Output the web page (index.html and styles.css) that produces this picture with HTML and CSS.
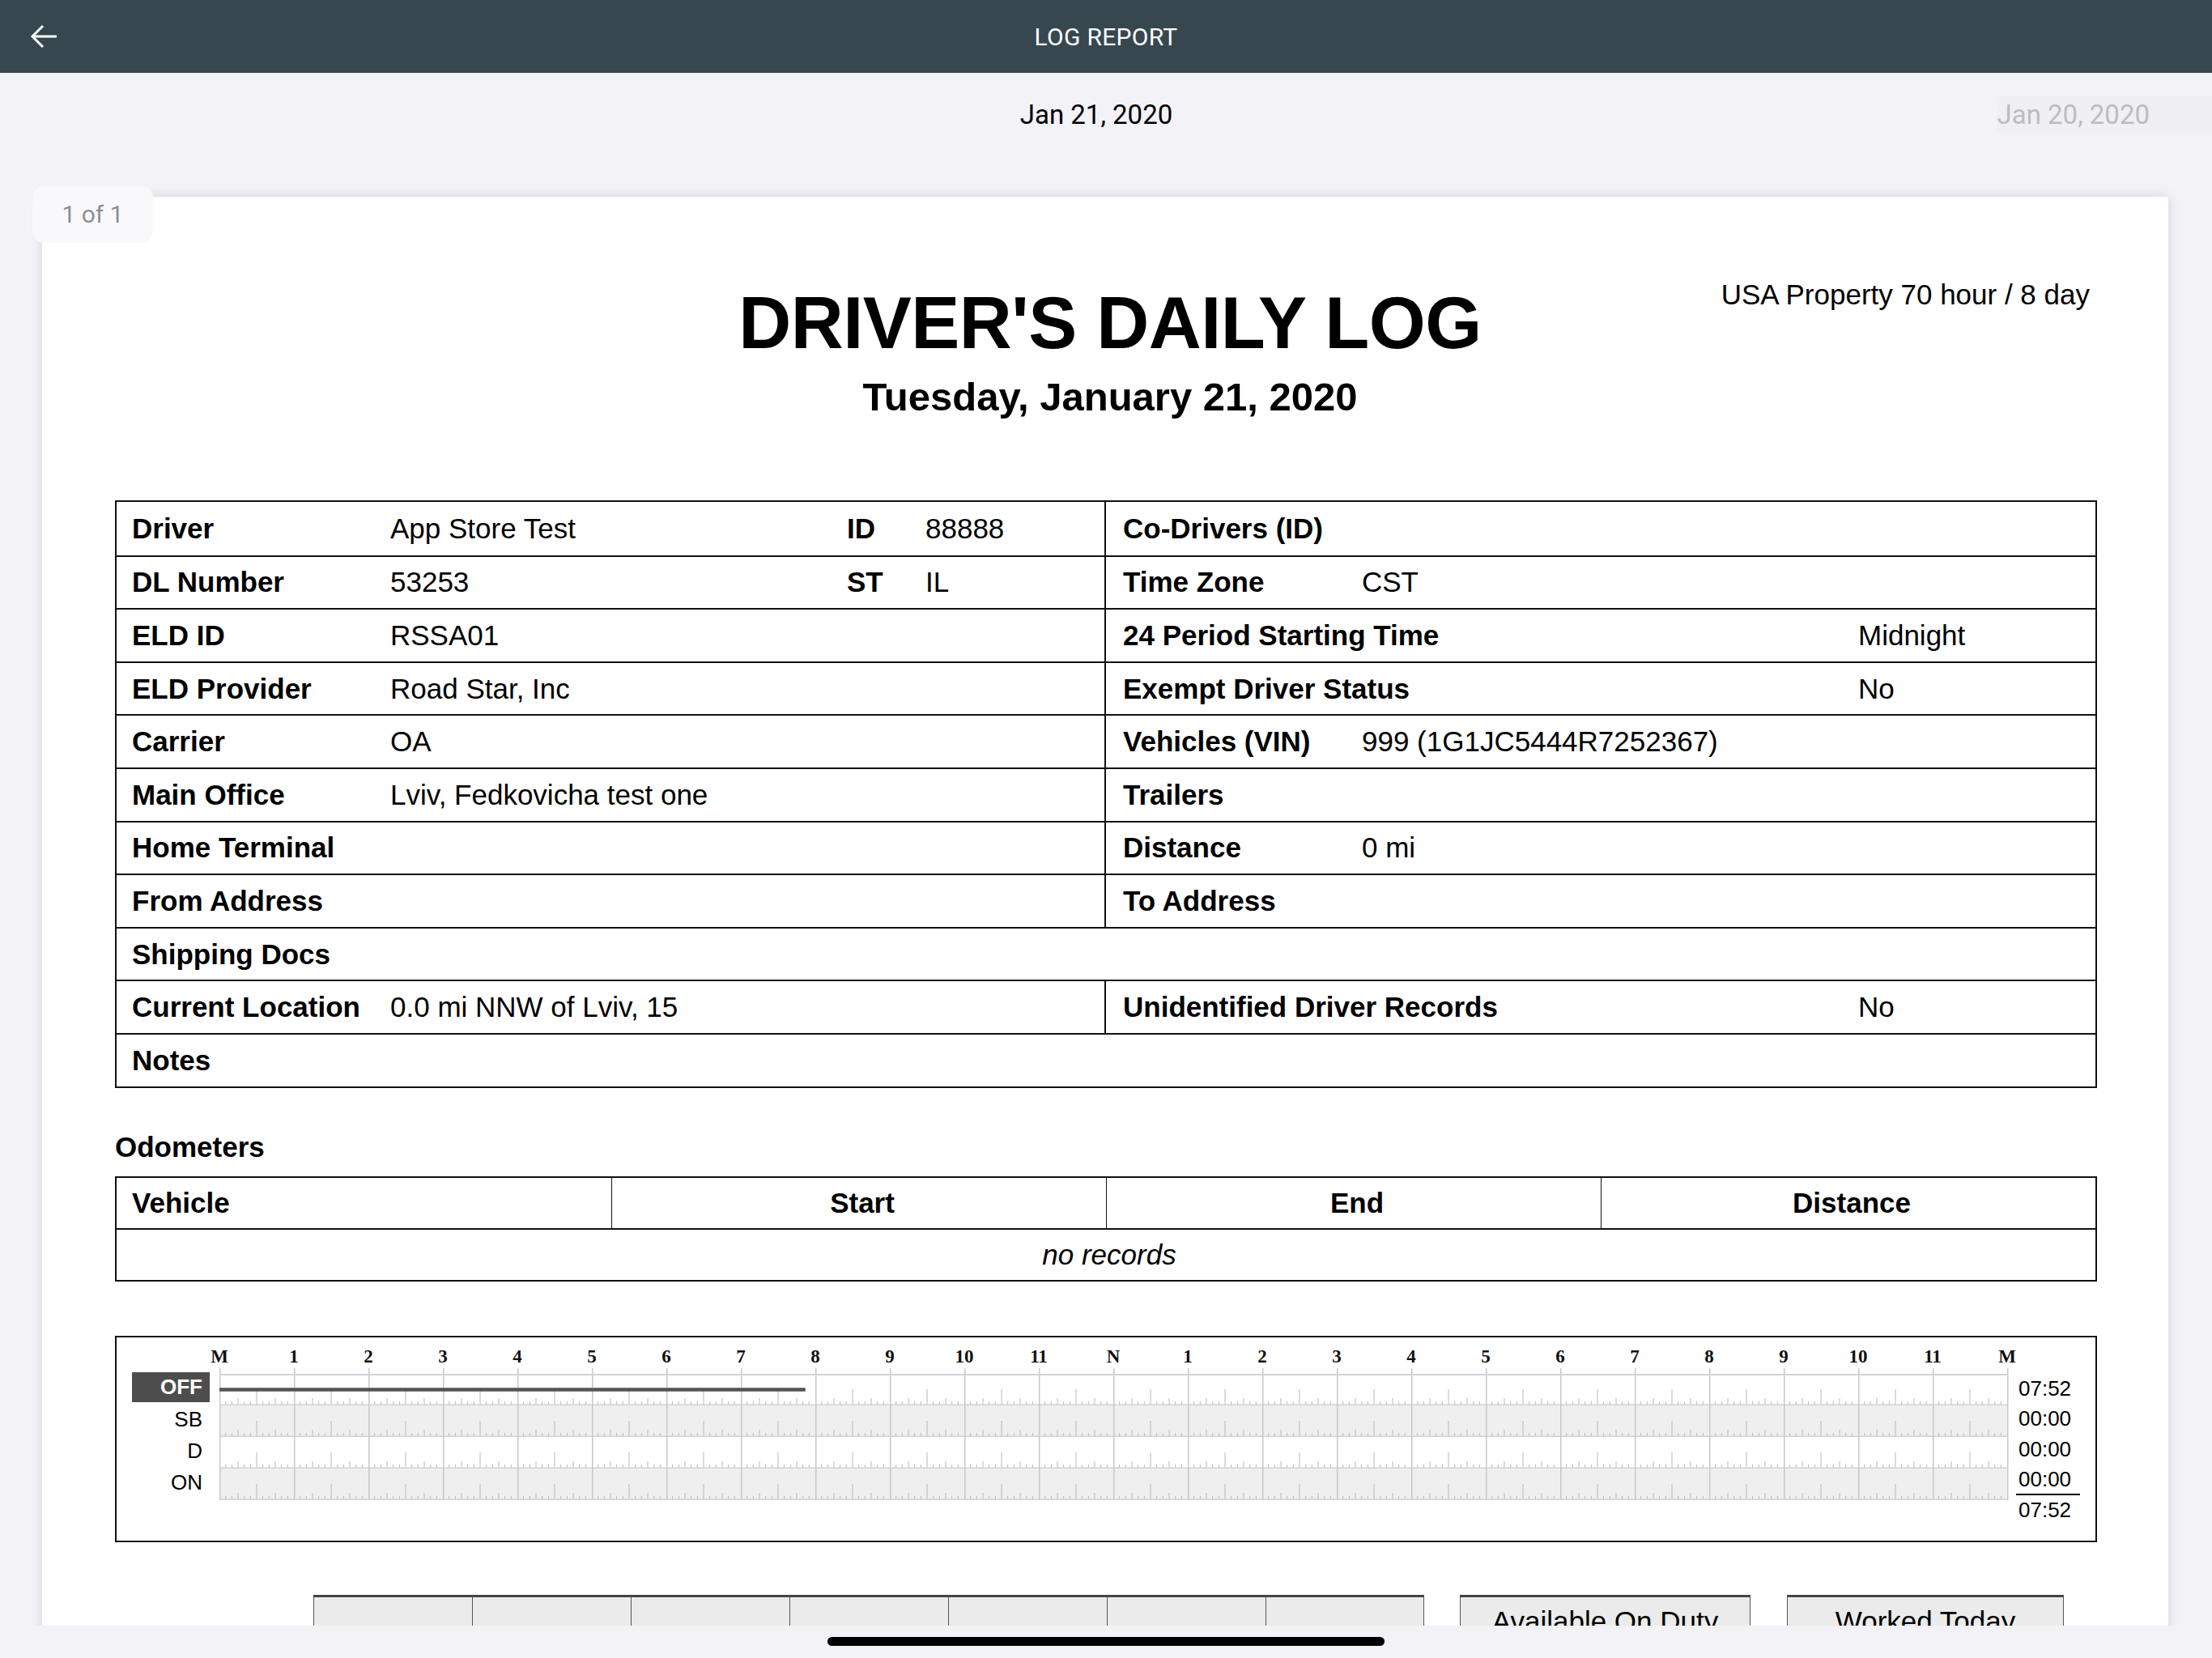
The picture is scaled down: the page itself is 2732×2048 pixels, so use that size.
FILE: index.html
```html
<!DOCTYPE html>
<html lang="en">
<head>
  <meta charset="UTF-8">
  <meta name="viewport" content="width=device-width, initial-scale=1.0">
  <title>Log Report</title>
  <link rel="stylesheet" href="styles.css">
</head>
<body>
  <header class="topbar">
    <button class="back" aria-label="Back">
      <svg width="34" height="30" viewBox="0 0 34 30"><path d="M33 15H3M16 2L3 15l13 13" fill="none" stroke="#fff" stroke-width="3"/></svg>
    </button>
    <h1 class="topbar_title">LOG REPORT</h1>
    <div></div>
  </header>

  <div class="datebar">
    <div></div>
    <div class="date_current">Jan 21, 2020</div>
    <div class="date_prev"><span>Jan 20, 2020</span></div>
  </div>

  <main class="viewer">
    <div class="page_badge">1 of 1</div>
    <article class="paper">
      <div class="doc_head">
        <div></div>
        <div class="doc_titles">
          <h2 class="doc_title">DRIVER'S DAILY LOG</h2>
          <p class="doc_date">Tuesday, January 21, 2020</p>
        </div>
        <p class="doc_rule">USA Property 70 hour / 8 day</p>
      </div>

      <div class="info">
        <div class="info_row">
          <div class="cell"><b class="lbl">Driver</b><span class="val_w">App Store Test</span><b class="lbl_s">ID</b><span>88888</span></div>
          <div class="cell"><b>Co-Drivers (ID)</b></div>
        </div>
        <div class="info_row">
          <div class="cell"><b class="lbl">DL Number</b><span class="val_w">53253</span><b class="lbl_s">ST</b><span>IL</span></div>
          <div class="cell"><b class="lbl_r">Time Zone</b><span>CST</span></div>
        </div>
        <div class="info_row">
          <div class="cell"><b class="lbl">ELD ID</b><span>RSSA01</span></div>
          <div class="cell"><b class="lbl_rl">24 Period Starting Time</b><span>Midnight</span></div>
        </div>
        <div class="info_row">
          <div class="cell"><b class="lbl">ELD Provider</b><span>Road Star, Inc</span></div>
          <div class="cell"><b class="lbl_rl">Exempt Driver Status</b><span>No</span></div>
        </div>
        <div class="info_row">
          <div class="cell"><b class="lbl">Carrier</b><span>OA</span></div>
          <div class="cell"><b class="lbl_r">Vehicles (VIN)</b><span>999 (1G1JC5444R7252367)</span></div>
        </div>
        <div class="info_row">
          <div class="cell"><b class="lbl">Main Office</b><span>Lviv, Fedkovicha test one</span></div>
          <div class="cell"><b>Trailers</b></div>
        </div>
        <div class="info_row">
          <div class="cell"><b class="lbl">Home Terminal</b></div>
          <div class="cell"><b class="lbl_r">Distance</b><span>0 mi</span></div>
        </div>
        <div class="info_row">
          <div class="cell"><b class="lbl">From Address</b></div>
          <div class="cell"><b>To Address</b></div>
        </div>
        <div class="info_row info_row_full">
          <div class="cell"><b>Shipping Docs</b></div>
        </div>
        <div class="info_row">
          <div class="cell"><b class="lbl">Current Location</b><span>0.0 mi NNW of Lviv, 15</span></div>
          <div class="cell"><b class="lbl_rl">Unidentified Driver Records</b><span>No</span></div>
        </div>
        <div class="info_row info_row_full">
          <div class="cell"><b>Notes</b></div>
        </div>
      </div>

      <h3 class="section_title">Odometers</h3>
      <div class="odo">
        <div class="odo_head">
          <div class="odo_left">Vehicle</div>
          <div>Start</div>
          <div>End</div>
          <div>Distance</div>
        </div>
        <div class="odo_empty">no records</div>
      </div>

      <div class="chart">
        <div class="status_labels">
          <div class="status status_on">OFF</div>
          <div class="status">SB</div>
          <div class="status">D</div>
          <div class="status">ON</div>
        </div>
        <svg class="grid" width="2228" height="205" viewBox="0 0 2228 205">
          <defs>
            <pattern id="ticks" x="9" y="45" width="92" height="39" patternUnits="userSpaceOnUse">
              <path d="M7.67 34v5M15.33 34v5M23 30v9M30.67 34v5M38.33 34v5M46 19v20M53.67 34v5M61.33 34v5M69 30v9M76.67 34v5M84.33 34v5" stroke="#b8b8b8" stroke-width="1"/>
              <path d="M0 38.25H92" stroke="#d2d2d2" stroke-width="1.5"/>
            </pattern>
            <pattern id="hours" x="9" y="38" width="92" height="163" patternUnits="userSpaceOnUse">
              <path d="M0.75 0V163" stroke="#c8c8c8" stroke-width="1.5"/>
            </pattern>
          </defs>
          <rect x="9" y="84" width="2208" height="39" fill="#efefef"/>
          <rect x="9" y="162" width="2208" height="39" fill="#efefef"/>
          <rect x="9" y="45" width="2208" height="156" fill="url(#ticks)"/>
          <rect x="9" y="38" width="2210" height="163" fill="url(#hours)"/>
          <path d="M9 46H2218" stroke="#d2d2d2" stroke-width="2"/>
          <path d="M9 64.5H732.7" stroke="#555" stroke-width="4.5"/>
          <g class="hour_labels">
            <text x="9" y="31">M</text>
            <text x="101" y="31">1</text>
            <text x="193" y="31">2</text>
            <text x="285" y="31">3</text>
            <text x="377" y="31">4</text>
            <text x="469" y="31">5</text>
            <text x="561" y="31">6</text>
            <text x="653" y="31">7</text>
            <text x="745" y="31">8</text>
            <text x="837" y="31">9</text>
            <text x="929" y="31">10</text>
            <text x="1021" y="31">11</text>
            <text x="1113" y="31">N</text>
            <text x="1205" y="31">1</text>
            <text x="1297" y="31">2</text>
            <text x="1389" y="31">3</text>
            <text x="1481" y="31">4</text>
            <text x="1573" y="31">5</text>
            <text x="1665" y="31">6</text>
            <text x="1757" y="31">7</text>
            <text x="1849" y="31">8</text>
            <text x="1941" y="31">9</text>
            <text x="2033" y="31">10</text>
            <text x="2125" y="31">11</text>
            <text x="2217" y="31">M</text>
          </g>
        </svg>
        <div class="totals">
          <div>07:52</div>
          <div>00:00</div>
          <div>00:00</div>
          <div class="totals_sum">00:00</div>
          <div>07:52</div>
        </div>
      </div>

      <div class="recap">
        <div class="recap_days">
          <div></div><div></div><div></div><div></div><div></div><div></div><div></div>
        </div>
        <div class="recap_box recap_avail">Available On Duty</div>
        <div class="recap_box recap_worked">Worked Today</div>
      </div>
    </article>
  </main>

  <div class="home_bar"><span></span></div>
</body>
</html>
```

FILE: styles.css
```css
*{
  margin: 0;
  padding: 0;
  box-sizing: border-box;
}

html, body{
  height: 100%;
  overflow: hidden;
}

body{
  background: #f2f2f7;
  font-family: "Roboto", "Noto Sans", sans-serif;
  color: #000;
}

/* top navigation */
.topbar{
  display: grid;
  grid-template-columns: 1fr auto 1fr;
  align-items: center;
  height: 90px;
  background: #37474f;
  color: #fff;
}
.back{
  justify-self: start;
  display: flex;
  margin-left: 37px;
  border: 0;
  background: none;
}
.topbar_title{
  font-size: 30px;
  font-weight: 400;
  letter-spacing: 0.3px;
}

.datebar{
  display: grid;
  grid-template-columns: 1fr auto 1fr;
  align-items: center;
  height: 102px;
  font-size: 33px;
}
.date_current{
  padding-right: 24px;
}
.date_prev{
  justify-self: end;
}
.date_prev span{
  display: inline-block;
  height: 45px;
  line-height: 45px;
  padding-right: 77px;
  color: #bdbdbd;
  background: #efeff4;
}

/* document viewer */
.viewer{
  position: relative;
  padding: 51px 54px 0 52px;
}
.page_badge{
  position: absolute;
  left: 40px;
  top: 38px;
  width: 149px;
  height: 70px;
  line-height: 70px;
  text-align: center;
  font-size: 30px;
  color: #8e8e93;
  background: rgba(249, 249, 251, 0.96);
  border-radius: 14px;
  z-index: 2;
}
.paper{
  min-height: 1900px;
  padding: 103px 88px 0 90px;
  background: #fff;
  box-shadow: 0 0 14px rgba(0, 0, 0, 0.13);
  font-family: "Liberation Sans", Arial, sans-serif;
}

.doc_head{
  display: grid;
  grid-template-columns: 1fr auto 1fr;
}
.doc_titles{
  text-align: center;
  padding-left: 10px;
}
.doc_title{
  margin-top: 8px;
  font-size: 90px;
  line-height: 90px;
  font-weight: 700;
  letter-spacing: -0.5px;
}
.doc_date{
  margin-top: 22px;
  font-size: 49px;
  line-height: 49px;
  font-weight: 700;
}
.doc_rule{
  justify-self: end;
  margin-right: 9px;
  font-size: 35px;
  line-height: 35px;
}

/* info table */
.info{
  margin-top: 103px;
  border: 2px solid #111;
  font-size: 35px;
}
.info_row{
  display: grid;
  grid-template-columns: 1fr 1fr;
  height: 65.6px;
}
.info_row + .info_row{
  border-top: 2px solid #111;
}
.info_row_full{
  grid-template-columns: 1fr;
}
.cell{
  display: flex;
  align-items: center;
  padding-left: 19px;
  white-space: nowrap;
}
.info_row .cell:first-child{
  border-right: 2px solid #111;
}
.info_row_full .cell:first-child{
  border-right: 0;
}
.info_row .cell + .cell{
  padding-left: 21px;
}
.lbl{
  width: 319px;
}
.val_w{
  width: 564px;
}
.lbl_s{
  width: 97px;
}
.lbl_r{
  width: 295px;
}
.lbl_rl{
  width: 908px;
}

/* odometers */
.section_title{
  margin-top: 55px;
  font-size: 35px;
  line-height: 35px;
  font-weight: 700;
}
.odo{
  margin-top: 19px;
  border: 2px solid #111;
  font-size: 35px;
}
.odo_head{
  display: grid;
  grid-template-columns: repeat(4, 1fr);
  height: 64px;
  border-bottom: 2px solid #111;
  font-weight: 700;
}
.odo_head div{
  display: flex;
  align-items: center;
  justify-content: center;
  padding-left: 8px;
}
.odo_head div + div{
  border-left: 1px solid #111;
}
.odo_head .odo_left{
  justify-content: flex-start;
  padding-left: 19px;
}
.odo_empty{
  height: 62px;
  line-height: 62px;
  padding-left: 8px;
  text-align: center;
  font-style: italic;
}

/* duty status chart */
.chart{
  display: flex;
  height: 255px;
  margin-top: 67px;
  border: 2px solid #111;
}
.status_labels{
  width: 118px;
  padding-top: 45px;
}
.status{
  height: 39px;
  line-height: 39px;
  padding-right: 12px;
  text-align: right;
  font-size: 26px;
}
.status_on{
  width: 96px;
  height: 37px;
  line-height: 37px;
  margin: -2px 0 2px 19px;
  padding-right: 9px;
  background: #4d4d4d;
  color: #fff;
  font-weight: 700;
}
.grid{
  display: block;
  flex: none;
  overflow: visible;
}
.hour_labels text{
  font-family: "Liberation Serif", "DejaVu Serif", serif;
  font-size: 23px;
  font-weight: 700;
  fill: #111;
  text-anchor: middle;
}
.totals{
  padding-top: 45px;
  font-size: 26px;
}
.totals div{
  width: 79px;
  height: 37.5px;
  line-height: 37.5px;
  padding-left: 3px;
}
.totals .totals_sum{
  border-bottom: 2px solid #000;
}

/* recap */
.recap{
  display: flex;
  margin-top: 65px;
  padding-left: 245px;
  font-size: 35px;
}
.recap_days{
  display: flex;
  border-top: 3px solid #444;
}
.recap_days div{
  width: 196px;
  height: 140px;
  background: #ebebeb;
  border-left: 1px solid #555;
}
.recap_days div:last-child{
  border-right: 1px solid #555;
}
.recap_box{
  height: 140px;
  padding-top: 12px;
  line-height: 35px;
  text-align: center;
  background: #ebebeb;
  border: 1px solid #555;
  border-top: 3px solid #444;
}
.recap_avail{
  width: 359px;
  margin-left: 44px;
}
.recap_worked{
  width: 342px;
  margin-left: 45px;
}

.home_bar{
  position: fixed;
  left: 0;
  right: 0;
  bottom: 0;
  display: flex;
  justify-content: center;
  height: 40px;
  padding-top: 14px;
  background: #f2f2f7;
}
.home_bar span{
  width: 688px;
  height: 11px;
  border-radius: 6px;
  background: #000;
}
```
